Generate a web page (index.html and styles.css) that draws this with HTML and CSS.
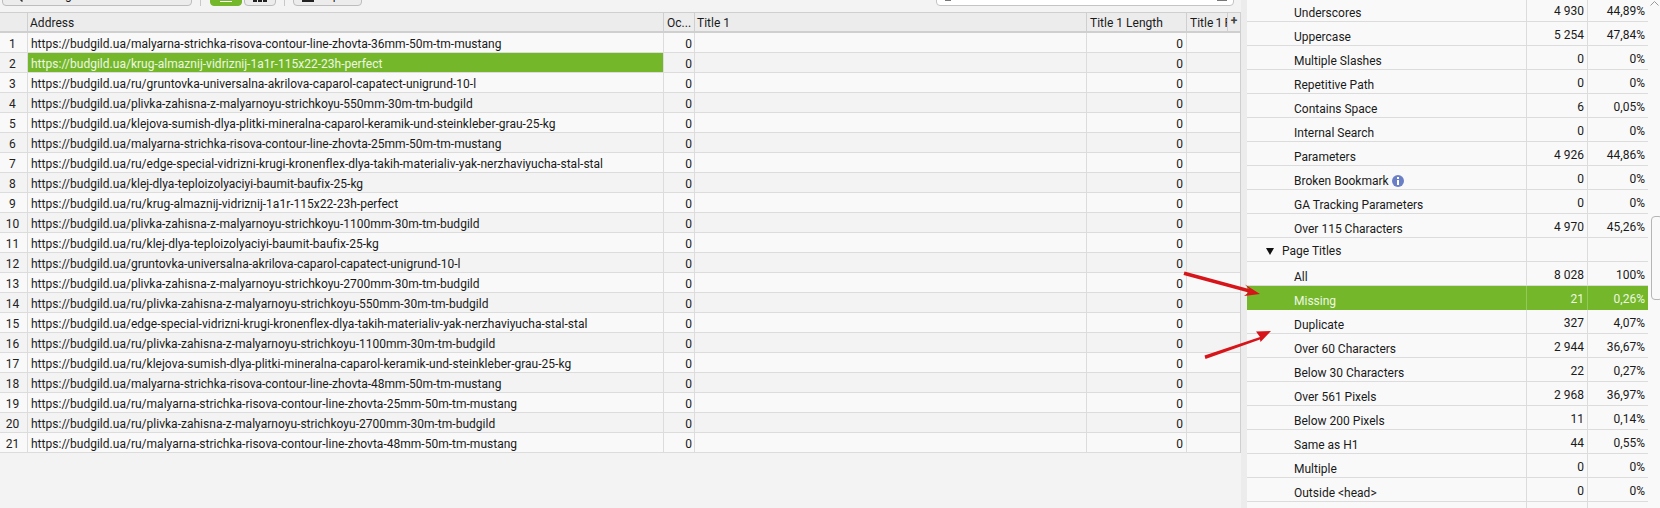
FILE: index.html
```html
<!DOCTYPE html>
<html lang="en">
<head>
<meta charset="utf-8">
<title>SEO Spider</title>
<link rel="stylesheet" href="styles.css">
</head>
<body>
<div class="app">
  <main class="left">
    <div class="toolbar">
      <button class="btn btn-search"><svg class="ico" width="12" height="12" viewBox="0 0 12 12"><circle cx="5" cy="5" r="4" fill="none" stroke="#333" stroke-width="1.5"/><path d="M8 8l3.500 3.500" stroke="#333" stroke-width="1.500"/></svg>Configuration</button>
      <span class="sep sep-a"></span>
      <button class="btn btn-view btn-on"><svg width="12" height="12" viewBox="0 0 12 12"><rect width="12" height="12" fill="#fff"/><path d="M0 10.500h12" stroke="#74b72a"/></svg></button>
      <button class="btn btn-view"><svg width="14" height="12" viewBox="0 0 14 12"><path d="M0 0h4v12H0zM5 0h4v12H5zM10 0h4v12h-4z" fill="#222"/></svg></button>
      <span class="sep sep-b"></span>
      <button class="btn btn-export"><svg class="ico-export" width="12" height="12" viewBox="0 0 12 12"><rect width="12" height="12" fill="#222"/></svg>Export</button>
      <div class="search">
        <span class="search-mark search-mark-a"></span>
        <span class="search-mark search-mark-b"></span>
      </div>
    </div>
    <div class="grid">
      <div class="row head">
        <div class="cell"></div>
        <div class="cell">Address</div>
        <div class="cell">Oc...</div>
        <div class="cell">Title 1</div>
        <div class="cell">Title 1 Length</div>
        <div class="cell cell-last"><span class="clip">Title 1 Pixel Width</span><span class="plus">+</span></div>
      </div>
      <div class="row"><div class="cell num">1</div><div class="cell">https://budgild.ua/malyarna-strichka-risova-contour-line-zhovta-36mm-50m-tm-mustang</div><div class="cell r">0</div><div class="cell"></div><div class="cell r">0</div><div class="cell"></div></div>
      <div class="row"><div class="cell num">2</div><div class="cell sel">https://budgild.ua/krug-almaznij-vidriznij-1a1r-115x22-23h-perfect</div><div class="cell r">0</div><div class="cell"></div><div class="cell r">0</div><div class="cell"></div></div>
      <div class="row"><div class="cell num">3</div><div class="cell">https://budgild.ua/ru/gruntovka-universalna-akrilova-caparol-capatect-unigrund-10-l</div><div class="cell r">0</div><div class="cell"></div><div class="cell r">0</div><div class="cell"></div></div>
      <div class="row"><div class="cell num">4</div><div class="cell">https://budgild.ua/plivka-zahisna-z-malyarnoyu-strichkoyu-550mm-30m-tm-budgild</div><div class="cell r">0</div><div class="cell"></div><div class="cell r">0</div><div class="cell"></div></div>
      <div class="row"><div class="cell num">5</div><div class="cell">https://budgild.ua/klejova-sumish-dlya-plitki-mineralna-caparol-keramik-und-steinkleber-grau-25-kg</div><div class="cell r">0</div><div class="cell"></div><div class="cell r">0</div><div class="cell"></div></div>
      <div class="row"><div class="cell num">6</div><div class="cell">https://budgild.ua/malyarna-strichka-risova-contour-line-zhovta-25mm-50m-tm-mustang</div><div class="cell r">0</div><div class="cell"></div><div class="cell r">0</div><div class="cell"></div></div>
      <div class="row"><div class="cell num">7</div><div class="cell">https://budgild.ua/ru/edge-special-vidrizni-krugi-kronenflex-dlya-takih-materialiv-yak-nerzhaviyucha-stal-stal</div><div class="cell r">0</div><div class="cell"></div><div class="cell r">0</div><div class="cell"></div></div>
      <div class="row"><div class="cell num">8</div><div class="cell">https://budgild.ua/klej-dlya-teploizolyaciyi-baumit-baufix-25-kg</div><div class="cell r">0</div><div class="cell"></div><div class="cell r">0</div><div class="cell"></div></div>
      <div class="row"><div class="cell num">9</div><div class="cell">https://budgild.ua/ru/krug-almaznij-vidriznij-1a1r-115x22-23h-perfect</div><div class="cell r">0</div><div class="cell"></div><div class="cell r">0</div><div class="cell"></div></div>
      <div class="row"><div class="cell num">10</div><div class="cell">https://budgild.ua/plivka-zahisna-z-malyarnoyu-strichkoyu-1100mm-30m-tm-budgild</div><div class="cell r">0</div><div class="cell"></div><div class="cell r">0</div><div class="cell"></div></div>
      <div class="row"><div class="cell num">11</div><div class="cell">https://budgild.ua/ru/klej-dlya-teploizolyaciyi-baumit-baufix-25-kg</div><div class="cell r">0</div><div class="cell"></div><div class="cell r">0</div><div class="cell"></div></div>
      <div class="row"><div class="cell num">12</div><div class="cell">https://budgild.ua/gruntovka-universalna-akrilova-caparol-capatect-unigrund-10-l</div><div class="cell r">0</div><div class="cell"></div><div class="cell r">0</div><div class="cell"></div></div>
      <div class="row"><div class="cell num">13</div><div class="cell">https://budgild.ua/plivka-zahisna-z-malyarnoyu-strichkoyu-2700mm-30m-tm-budgild</div><div class="cell r">0</div><div class="cell"></div><div class="cell r">0</div><div class="cell"></div></div>
      <div class="row"><div class="cell num">14</div><div class="cell">https://budgild.ua/ru/plivka-zahisna-z-malyarnoyu-strichkoyu-550mm-30m-tm-budgild</div><div class="cell r">0</div><div class="cell"></div><div class="cell r">0</div><div class="cell"></div></div>
      <div class="row"><div class="cell num">15</div><div class="cell">https://budgild.ua/edge-special-vidrizni-krugi-kronenflex-dlya-takih-materialiv-yak-nerzhaviyucha-stal-stal</div><div class="cell r">0</div><div class="cell"></div><div class="cell r">0</div><div class="cell"></div></div>
      <div class="row"><div class="cell num">16</div><div class="cell">https://budgild.ua/ru/plivka-zahisna-z-malyarnoyu-strichkoyu-1100mm-30m-tm-budgild</div><div class="cell r">0</div><div class="cell"></div><div class="cell r">0</div><div class="cell"></div></div>
      <div class="row"><div class="cell num">17</div><div class="cell">https://budgild.ua/ru/klejova-sumish-dlya-plitki-mineralna-caparol-keramik-und-steinkleber-grau-25-kg</div><div class="cell r">0</div><div class="cell"></div><div class="cell r">0</div><div class="cell"></div></div>
      <div class="row"><div class="cell num">18</div><div class="cell">https://budgild.ua/malyarna-strichka-risova-contour-line-zhovta-48mm-50m-tm-mustang</div><div class="cell r">0</div><div class="cell"></div><div class="cell r">0</div><div class="cell"></div></div>
      <div class="row"><div class="cell num">19</div><div class="cell">https://budgild.ua/ru/malyarna-strichka-risova-contour-line-zhovta-25mm-50m-tm-mustang</div><div class="cell r">0</div><div class="cell"></div><div class="cell r">0</div><div class="cell"></div></div>
      <div class="row"><div class="cell num">20</div><div class="cell">https://budgild.ua/ru/plivka-zahisna-z-malyarnoyu-strichkoyu-2700mm-30m-tm-budgild</div><div class="cell r">0</div><div class="cell"></div><div class="cell r">0</div><div class="cell"></div></div>
      <div class="row"><div class="cell num">21</div><div class="cell">https://budgild.ua/ru/malyarna-strichka-risova-contour-line-zhovta-48mm-50m-tm-mustang</div><div class="cell r">0</div><div class="cell"></div><div class="cell r">0</div><div class="cell"></div></div>
    </div>
  </main>
  <div class="gutter"></div>
  <aside class="side">
    <div class="list">
      <div class="item"><span class="name">Underscores</span><span class="val">4 930</span><span class="val">44,89%</span></div>
      <div class="item"><span class="name">Uppercase</span><span class="val">5 254</span><span class="val">47,84%</span></div>
      <div class="item"><span class="name">Multiple Slashes</span><span class="val">0</span><span class="val">0%</span></div>
      <div class="item"><span class="name">Repetitive Path</span><span class="val">0</span><span class="val">0%</span></div>
      <div class="item"><span class="name">Contains Space</span><span class="val">6</span><span class="val">0,05%</span></div>
      <div class="item"><span class="name">Internal Search</span><span class="val">0</span><span class="val">0%</span></div>
      <div class="item"><span class="name">Parameters</span><span class="val">4 926</span><span class="val">44,86%</span></div>
      <div class="item"><span class="name">Broken Bookmark<svg class="info" width="12" height="12" viewBox="0 0 12 12"><circle cx="6" cy="6" r="6" fill="#6b7fc6"/><rect x="5" y="2" width="2" height="2" fill="#fff"/><rect x="5" y="5" width="2" height="5" fill="#fff"/></svg></span><span class="val">0</span><span class="val">0%</span></div>
      <div class="item"><span class="name">GA Tracking Parameters</span><span class="val">0</span><span class="val">0%</span></div>
      <div class="item"><span class="name">Over 115 Characters</span><span class="val">4 970</span><span class="val">45,26%</span></div>
      <div class="item group"><span class="name"><svg class="tri" width="8" height="7" viewBox="0 0 8 7"><path d="M0 0h8L4 7z" fill="#111"/></svg>Page Titles</span><span class="val"></span><span class="val"></span></div>
      <div class="item"><span class="name">All</span><span class="val">8 028</span><span class="val">100%</span></div>
      <div class="item on"><span class="name">Missing</span><span class="val">21</span><span class="val">0,26%</span></div>
      <div class="item"><span class="name">Duplicate</span><span class="val">327</span><span class="val">4,07%</span></div>
      <div class="item"><span class="name">Over 60 Characters</span><span class="val">2 944</span><span class="val">36,67%</span></div>
      <div class="item"><span class="name">Below 30 Characters</span><span class="val">22</span><span class="val">0,27%</span></div>
      <div class="item"><span class="name">Over 561 Pixels</span><span class="val">2 968</span><span class="val">36,97%</span></div>
      <div class="item"><span class="name">Below 200 Pixels</span><span class="val">11</span><span class="val">0,14%</span></div>
      <div class="item"><span class="name">Same as H1</span><span class="val">44</span><span class="val">0,55%</span></div>
      <div class="item"><span class="name">Multiple</span><span class="val">0</span><span class="val">0%</span></div>
      <div class="item"><span class="name">Outside &lt;head&gt;</span><span class="val">0</span><span class="val">0%</span></div>
      <div class="item"><span class="name"></span><span class="val"></span><span class="val"></span></div>
    </div>
  </aside>
  <div class="scrollbar">
    <svg class="chev" width="9" height="5" viewBox="0 0 9 5"><path d="M.5 4.500l4-4 4 4" fill="none" stroke="#999"/></svg>
    <div class="thumb"></div>
  </div>
  <svg class="arrows" width="1660" height="508" viewBox="0 0 1660 508">
    <path d="M1184.500 271.500L1249 289L1245 284.500L1260 294L1244 296L1248.500 292.500L1183.500 275Z" fill="#d7141a"/>
    <path d="M1204.500 355.500L1260 337L1256 331.500L1271 331L1260.500 342L1260 339.500L1205.500 359Z" fill="#d7141a"/>
  </svg>
</div>
</body>
</html>
```
FILE: styles.css
```css
* { box-sizing: border-box; }
html, body { margin: 0; padding: 0; }
body {
  width: 1660px;
  height: 508px;
  overflow: hidden;
  background: #f3f3f3;
  font-family: Roboto, "Liberation Sans", sans-serif;
  font-size: 12px;
  color: #1a1a1a;
}
.app { position: relative; display: flex; width: 1660px; height: 508px; overflow: hidden; }

/* left: toolbar + results table */
.left { width: 1241px; flex: none; display: flex; flex-direction: column; }
.toolbar { height: 12px; flex: none; display: flex; align-items: flex-end; overflow: hidden; padding: 0 0 6px 2px; }
.btn {
  flex: none;
  display: flex;
  align-items: flex-end;
  height: 24px;
  padding: 0 0 3px;
  background: #ececec;
  border: 1px solid #bdbdbd;
  border-radius: 4px;
  font: 12px/14px Roboto, sans-serif;
  color: #1a1a1a;
}
.btn-search { width: 190px; padding-left: 8px; }
.ico { margin-right: 14px; }
.sep { flex: none; width: 1px; height: 24px; background: #c8c8c8; }
.sep-a { margin: 0 9px 0 8px; }
.sep-b { margin: 0 8px 0 8px; }
.btn-view { width: 32px; justify-content: center; }
.btn-view + .btn-view { margin-left: 2px; }
.btn-on { background: #74b72a; border-color: #74b72a; }
.btn-export { width: 69px; padding-left: 8px; }
.ico-export { margin-right: 6px; }
.search {
  flex: none;
  position: relative;
  width: 298px;
  height: 24px;
  margin-left: 574px;
  background: #fff;
  border: 1px solid #c4c4c4;
  border-radius: 4px;
}
.search-mark { position: absolute; bottom: 4px; height: 2px; background: #777; }
.search-mark-a { left: 8px; width: 6px; }
.search-mark-b { right: 6px; width: 10px; }

.grid { border-top: 1px solid #cfcfcf; border-right: 1px solid #cfcfcf; }
.row {
  display: grid;
  grid-template-columns: 28px 636px 31px 392px 100px 53px;
  height: 20px;
  border-bottom: 1px solid #dcdcdc;
  background: #f9f9f9;
}
.row:nth-child(odd) { background: #f3f3f3; }
.row.head { height: 20px; background: #ececec; border-bottom: 2px solid #cfcfcf; }
.cell {
  min-width: 0;
  padding: 2px 3px 0;
  line-height: 19px;
  letter-spacing: .015px;
  white-space: nowrap;
  overflow: hidden;
  border-right: 1px solid #dcdcdc;
}
.row .cell:first-child { padding: 2px 2px 0 0; }
.row .cell:last-child { border-right: 0; }
.head .cell { border-right-color: #cfcfcf; line-height: 17px; padding-top: 2px; }
.head .cell:nth-child(2), .head .cell:nth-child(4) { padding-left: 2px; }
.num { text-align: center; color: #222; }
.r { text-align: right; padding-right: 3px; }
.row .cell:nth-child(3).r { padding-right: 2px; }
.sel { background: #74b72a; color: #eef8e2; }
.row .cell-last { display: flex; padding: 2px 0 0 3px; }
.clip { flex: 1; min-width: 0; overflow: hidden; word-spacing: -.8px; }
.plus { flex: none; width: 13px; margin-top: -2px; border-left: 1px solid #cfcfcf; text-align: center; font-weight: 700; font-size: 12px; line-height: 17px; color: #444; }

.gutter { width: 6px; flex: none; background: #ececec; }

/* right: overview tree */
.side { width: 401px; flex: none; overflow: hidden; background: #f9f9f9; }
.list { margin-top: -2px; }
.item {
  display: grid;
  grid-template-columns: 280px 61px 60px;
  height: 24px;
  border-bottom: 1px solid #dcdcdc;
  font-size: 12px;
  background: #f9f9f9;
}
.name, .val { white-space: nowrap; border-right: 1px solid #dcdcdc; }
.name { padding: 3px 0 0 47px; display: flex; align-items: center; line-height: 20px; }
.val { text-align: right; padding-right: 3px; line-height: 26px; }
.val:last-child { border-right: 0; }
.group .name { padding-left: 19px; }
.tri { margin-right: 8px; }
.info { margin-left: 3px; }
.on { background: #74b72a; color: #eef8e2; border-bottom-color: #74b72a; }
.on .name, .on .val { border-right-color: #93c95a; }

.scrollbar { position: relative; width: 12px; flex: none; background: #f9f9f9; }
.chev { display: block; margin: 1px 0 0 2px; }
.thumb {
  position: absolute;
  top: 216px;
  left: 3px;
  width: 12px;
  height: 84px;
  background: #f9f9f9;
  border: 1px solid #b5b5b5;
  border-radius: 4px;
}
.arrows { position: absolute; left: 0; top: 0; pointer-events: none; }
```
